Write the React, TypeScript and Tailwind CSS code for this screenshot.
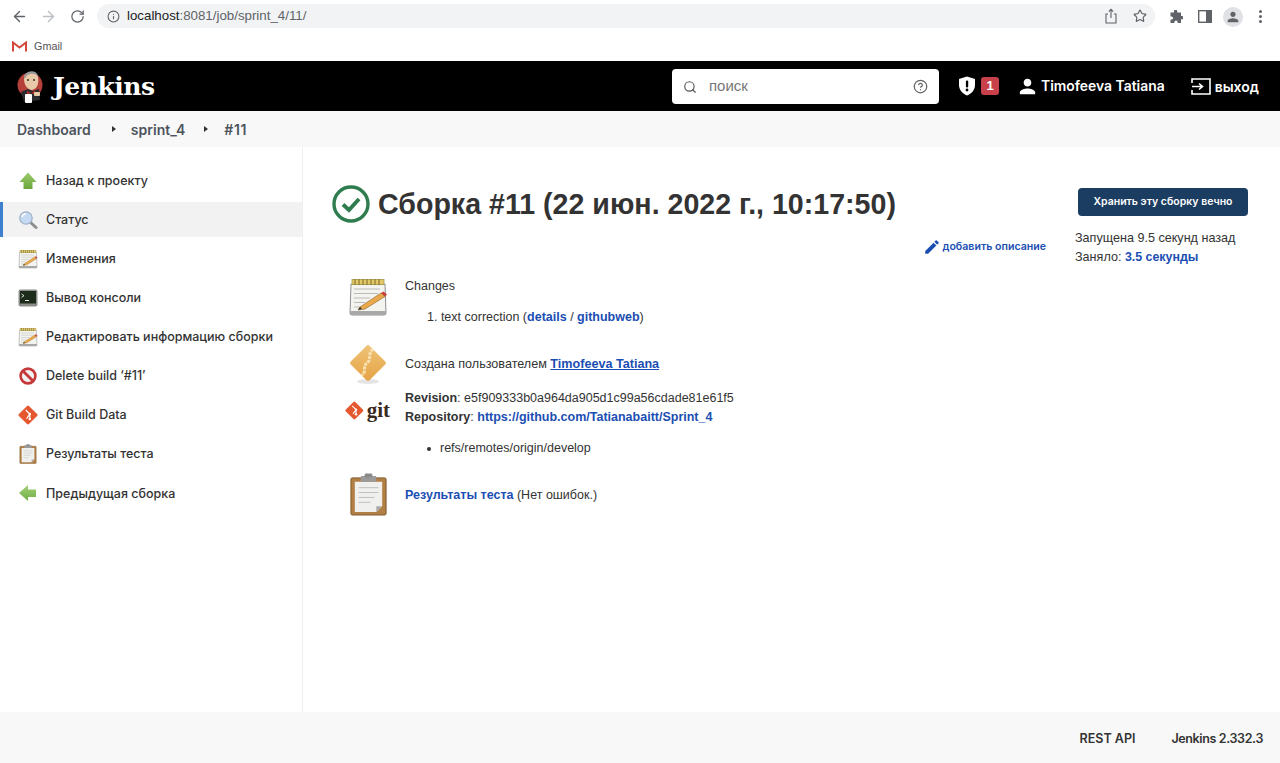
import { ArrowLeft, ArrowRight, RotateCw, Info, Star, Search, CircleHelp } from 'lucide-react';

const personPath = 'M12 12c2.21 0 4-1.79 4-4s-1.79-4-4-4-4 1.79-4 4 1.79 4 4 4zm0 2c-2.67 0-8 1.34-8 4v2h16v-2c0-2.66-5.33-4-8-4z';

function GreenArrowUp() {
    return (
        <svg width="20" height="20" viewBox="0 0 20 20">
            <defs>
                <linearGradient id="gu" x1="0" y1="0" x2="0" y2="1">
                    <stop offset="0" stopColor="#9ccb6a" />
                    <stop offset="1" stopColor="#6aa63c" />
                </linearGradient>
            </defs>
            <path d="M10 1.5 L18.5 11 H14.5 V18 H5.5 V11 H1.5 Z" fill="url(#gu)" />
        </svg>
    );
}

function GreenArrowLeft() {
    return (
        <svg width="20" height="20" viewBox="0 0 20 20">
            <defs>
                <linearGradient id="gl" x1="0" y1="0" x2="0" y2="1">
                    <stop offset="0" stopColor="#a3d175" />
                    <stop offset="1" stopColor="#6fae48" />
                </linearGradient>
            </defs>
            <path d="M1 10 L10 2 V6.5 H18 V14 H10 V18 Z" fill="url(#gl)" />
        </svg>
    );
}

function Magnifier() {
    return (
        <svg width="20" height="20" viewBox="0 0 20 20">
            <path d="M12 12 L18 17.5" stroke="#8e8e8e" strokeWidth="3" strokeLinecap="round" />
            <circle cx="8" cy="8" r="6.2" fill="#c5d9f2" stroke="#9fb2c9" strokeWidth="1.3" />
            <path d="M4 7 a4.5 4.5 0 0 1 4 -3.2" stroke="#fff" strokeWidth="1.4" fill="none" />
        </svg>
    );
}

function Notepad({ size = 20 }: { size?: number }) {
    return (
        <svg width={size} height={size} viewBox="0 0 40 40">
            <path d="M3 7 H37 L38 36 Q38 38 36 38 H4 Q2 38 2 36 Z" fill="#f3f3f0" stroke="#8f8f8f" strokeWidth="1" />
            <path d="M2 34 H38 V36 Q38 38 36 38 H4 Q2 38 2 36 Z" fill="#a8a8a8" />
            <rect x="4" y="2.5" width="32" height="5" fill="#e2c867" stroke="#a08f3c" strokeWidth="0.7" />
            <path d="M7 2v6M11 2v6M15 2v6M19 2v6M23 2v6M27 2v6M31 2v6" stroke="#7b6d2b" strokeWidth="1" />
            <path d="M6 12h26M6 16.5h24M6 21h16M6 25.5h11M6 30h8" stroke="#b3b3b3" strokeWidth="0.9" />
            <path d="M12 30 L33 16 L37 19.5 L17 32 L10 33 Z" fill="#e9a94c" stroke="#8a6526" strokeWidth="0.6" />
            <path d="M33 16 L35.5 14.5 L39 17.5 L37 19.5 Z" fill="#c9403a" />
            <path d="M10 33 L12 30 L14 32 Z" fill="#333" />
        </svg>
    );
}

function Terminal() {
    return (
        <svg width="20" height="20" viewBox="0 0 20 20">
            <rect x="0.5" y="1.5" width="19" height="17" rx="2" fill="#8a8d88" />
            <rect x="2" y="3" width="16" height="12.5" fill="#1c2b1c" />
            <path d="M3.5 6 L6 7.7 L3.5 9.4" stroke="#e8efe8" strokeWidth="0.9" fill="none" />
            <path d="M7 12.5 H11" stroke="#e8efe8" strokeWidth="1" />
        </svg>
    );
}

function NoEntry() {
    return (
        <svg width="20" height="20" viewBox="0 0 20 20">
            <circle cx="10" cy="10" r="7.4" fill="#f2f2f2" stroke="#c6393a" strokeWidth="2.6" />
            <path d="M5 5 L15 15" stroke="#c6393a" strokeWidth="2.8" />
        </svg>
    );
}

function GitDiamond({ size = 22 }: { size?: number }) {
    return (
        <svg width={size} height={size} viewBox="0 0 22 22">
            <rect x="3.2" y="3.2" width="15.6" height="15.6" rx="1.5" fill="#e4572f" transform="rotate(45 11 11)" />
            <path d="M8.5 5.5 L13 10 V15.5 M13 10 L9.5 15" stroke="#fff" strokeWidth="1.3" fill="none" />
            <circle cx="13" cy="10" r="1.4" fill="#fff" />
            <circle cx="13" cy="15.5" r="1.4" fill="#fff" />
        </svg>
    );
}

function Clipboard({ size = 20 }: { size?: number }) {
    return (
        <svg width={size} height={size} viewBox="0 0 40 44">
            <rect x="2" y="5" width="36" height="38" rx="1.5" fill="#b27f45" stroke="#7e5a2f" strokeWidth="1" />
            <path d="M6 9 H34 V34 L28 40 H6 Z" fill="#f0f0ee" />
            <path d="M28 40 L34 34 H28 Z" fill="#a8a8a8" />
            <rect x="12" y="3" width="16" height="6" rx="1" fill="#9a9a9a" />
            <rect x="16" y="0.5" width="8" height="4" rx="1.5" fill="#8a8a8a" />
            <path d="M10 15H30M10 20H30M10 25H26M10 30H22" stroke="#bdbdbd" strokeWidth="1" />
        </svg>
    );
}

function Fingerprint() {
    return (
        <svg width="40" height="42" viewBox="0 0 40 42">
            <defs>
                <linearGradient id="fp" x1="0" y1="0" x2="1" y2="1">
                    <stop offset="0" stopColor="#efc478" />
                    <stop offset="1" stopColor="#e6a245" />
                </linearGradient>
            </defs>
            <ellipse cx="20" cy="38.5" rx="11" ry="2.5" fill="#e5e5e5" />
            <rect x="6.8" y="6.8" width="26.4" height="26.4" rx="2" fill="url(#fp)" transform="rotate(45 20 20)" />
            <path d="M25 6 C19 12 24 16 19 20 C14 24 19 28 14 32" stroke="#f8e3b5" strokeWidth="3" fill="none" strokeDasharray="3 1" />
        </svg>
    );
}

function JenkinsLogo() {
    return (
        <svg width="28" height="36" viewBox="0 0 28 36">
            <circle cx="14" cy="17" r="12.5" fill="#b5403a" />
            <path d="M8 11 C7 3 20 1 22 9 C23 14 22 21 16 22 C11 22 8 16 8 11 Z" fill="#e8c9a8" />
            <path d="M8 11 C7 3 20 0 22 8 C18 5 12 5 10 9 Z" fill="#9a9a9a" />
            <circle cx="12" cy="12" r="0.9" fill="#222" />
            <circle cx="18" cy="12" r="0.9" fill="#222" />
            <path d="M5 24 L12 21 L17 23 L23 21 L24 32 L8 34 Z" fill="#2a2a2f" />
            <path d="M11 23 L15 25 L19 23 L19 26 L15 25 L11 26 Z" fill="#c9302c" />
            <rect x="9" y="26" width="7" height="9" rx="1" fill="#fff" />
            <rect x="18" y="24" width="6" height="4" rx="1" fill="#e8c9a8" />
        </svg>
    );
}

const menu = [
    { label: 'Назад к проекту', icon: <GreenArrowUp /> },
    { label: 'Статус', icon: <Magnifier />, active: true },
    { label: 'Изменения', icon: <Notepad /> },
    { label: 'Вывод консоли', icon: <Terminal /> },
    { label: 'Редактировать информацию сборки', icon: <Notepad /> },
    { label: 'Delete build ‘#11’', icon: <NoEntry /> },
    { label: 'Git Build Data', icon: <GitDiamond /> },
    { label: 'Результаты теста', icon: <Clipboard /> },
    { label: 'Предыдущая сборка', icon: <GreenArrowLeft /> },
];

export default function App() {
    return (
        <div className="w-[1280px] h-[763px] flex flex-col overflow-hidden bg-white text-[#333] font-['Liberation_Sans',sans-serif]">
            {/* browser toolbar */}
            <div className="h-[33px] flex items-center pl-[11px] pr-[8px]">
                <ArrowLeft size={17} className="text-[#5f6368]" />
                <ArrowRight size={17} className="text-[#bcbfc3] ml-[12px]" />
                <RotateCw size={15} className="text-[#5f6368] ml-[13px]" />
                <div className="ml-[12px] -mt-[1px] w-[1058px] h-[24px] rounded-full bg-[#f1f3f4] flex items-center pl-[10px] pr-[8px]">
                    <Info size={13} className="text-[#5f6368]" />
                    <span className="ml-[7px] text-[13.3px] text-[#5f6368] leading-none">
                        <span className="text-[#202124]">localhost</span>:8081/job/sprint_4/11/
                    </span>
                    <div className="ml-auto flex items-center gap-[16px]">
                        <svg className="-mr-[1px]" width="14" height="16" viewBox="0 0 14 16" fill="none" stroke="#5f6368" strokeWidth="1.1">
                            <path d="M4 6 H2 V15 H12 V6 H10" />
                            <path d="M7 10 V1.5 M4.8 3.6 L7 1.3 L9.2 3.6" />
                        </svg>
                        <Star size={14} className="text-[#5f6368]" />
                    </div>
                </div>
                <div className="ml-[14px] flex items-center">
                    <svg width="14" height="14" viewBox="0 0 14 14" fill="#5f6368">
                        <path d="M5 1.2 a1.6 1.6 0 0 1 3.2 0 V2.5 H12 V6 H13 a1.6 1.6 0 0 1 0 3.2 H12 V13 H8.6 V12 a1.6 1.6 0 0 0 -3.2 0 V13 H1.5 V9.6 H2.5 a1.6 1.6 0 0 0 0 -3.2 H1.5 V2.5 H5 Z" />
                    </svg>
                    <svg className="ml-[15px]" width="14" height="13" viewBox="0 0 14 13">
                        <rect x="0.7" y="0.7" width="12.6" height="11.6" fill="none" stroke="#5f6368" strokeWidth="1.4" />
                        <rect x="8" y="0.7" width="5.3" height="11.6" fill="#5f6368" />
                    </svg>
                    <div className="ml-[11px] w-[20px] h-[20px] rounded-full bg-[#dfe1e5] flex items-center justify-center">
                        <svg width="16" height="16" viewBox="0 0 24 24" fill="#5f6368"><path d={personPath} /></svg>
                    </div>
                    <div className="ml-[16px] mr-[10px] flex flex-col gap-[2px]">
                        <span className="w-[3px] h-[3px] rounded-full bg-[#5f6368]" />
                        <span className="w-[3px] h-[3px] rounded-full bg-[#5f6368]" />
                        <span className="w-[3px] h-[3px] rounded-full bg-[#5f6368]" />
                    </div>
                </div>
            </div>

            {/* bookmarks */}
            <div className="h-[28px] flex items-center pl-[12px] pb-[1px]">
                <svg width="15" height="11" viewBox="0 0 15 11" fill="none">
                    <path d="M1 10.5 V1.5 L7.5 6.5 L14 1.5 V10.5" stroke="#d1483d" strokeWidth="2" />
                </svg>
                <span className="ml-[7px] text-[10.8px] text-[#555]">Gmail</span>
            </div>

            {/* jenkins header */}
            <header className="h-[50px] bg-black flex items-center pl-[16px] pr-[21px] text-white">
                <JenkinsLogo />
                <span className="ml-[9px] font-['DejaVu_Serif',serif] font-bold text-[25px] tracking-[-0.5px] leading-none">Jenkins</span>
                <div className="ml-auto mt-[1px] w-[267px] h-[35px] bg-white rounded-[4px] flex items-center pl-[11px] pr-[11px] text-[#777]">
                    <Search size={14} className="text-[#555]" />
                    <span className="ml-[12px] text-[15px]">поиск</span>
                    <CircleHelp size={15} className="ml-auto text-[#666]" />
                </div>
                <svg className="ml-[19px]" width="18" height="20" viewBox="0 0 18 20">
                    <path d="M9 0.5 L17 3 V9 C17 14 13.5 17.8 9 19.5 C4.5 17.8 1 14 1 9 V3 Z" fill="#fff" />
                    <rect x="7.9" y="4.5" width="2.3" height="7" rx="1" fill="#000" />
                    <circle cx="9" cy="14" r="1.4" fill="#000" />
                </svg>
                <span className="ml-[5px] w-[18px] h-[18px] rounded-[3px] bg-[#c8404a] flex items-center justify-center text-[13px] font-bold">1</span>
                <svg className="ml-[17px]" width="23" height="23" viewBox="0 0 24 24" fill="#fff"><path d={personPath} /></svg>
                <span className="ml-[2px] font-['Inter',sans-serif] font-semibold text-[13.9px] whitespace-nowrap">Timofeeva Tatiana</span>
                <svg className="ml-[26px]" width="20" height="17" viewBox="0 0 20 17" fill="none" stroke="#fff" strokeWidth="1.6">
                    <path d="M1 5 V1 H19 V16 H1 V12" />
                    <path d="M1 8.5 H11 M8 5.5 L11.5 8.5 L8 11.5" />
                </svg>
                <span className="ml-[4px] font-['Inter',sans-serif] font-semibold text-[14px]">выход</span>
            </header>

            {/* breadcrumbs */}
            <nav className="h-[36px] bg-[#f8f8f8] flex items-center pl-[17px] font-['Inter',sans-serif] font-semibold text-[14px] text-[#4d545d]">
                <span>Dashboard</span>
                <span className="ml-[21px] w-0 h-0 border-y-[3.5px] border-y-transparent border-l-[4px] border-l-[#333]" />
                <span className="ml-[15px]">sprint_4</span>
                <span className="ml-[19px] w-0 h-0 border-y-[3.5px] border-y-transparent border-l-[4px] border-l-[#333]" />
                <span className="ml-[16px] tracking-[0.7px]">#11</span>
            </nav>

            <div className="flex-1 flex min-h-0">
                {/* sidebar */}
                <aside className="w-[303px] shrink-0 border-r border-[#f0f0f0] pt-[16px] flex flex-col gap-[4.12px]">
                    {menu.map(item => (
                        <div
                            key={item.label}
                            className={`h-[35px] flex items-center pl-[18px] border-l-[3px] ${item.active ? 'bg-[#f2f2f2] border-[#3f7fd0]' : 'border-transparent'}`}
                        >
                            <span className="w-[20px] h-[20px] -ml-[3px] flex items-center justify-center shrink-0">{item.icon}</span>
                            <span className="ml-[8px] pt-[1px] text-[12.5px] font-['Inter',sans-serif] font-medium text-[#333] whitespace-nowrap">{item.label}</span>
                        </div>
                    ))}
                </aside>

                {/* main */}
                <main className="flex-1 flex pl-[29px] pr-[32px]">
                    <div className="flex-1 min-w-0">
                        <div className="mt-[38px] flex items-center h-[38px]">
                            <svg width="38" height="38" viewBox="0 0 38 38" fill="none">
                                <circle cx="19" cy="19" r="17" stroke="#2f7d4f" strokeWidth="3.4" />
                                <path d="M11 19.5 L17 25 L27 14" stroke="#2f7d4f" strokeWidth="4" />
                            </svg>
                            <h1 className="ml-[8px] text-[28.6px] font-bold whitespace-nowrap leading-none">Сборка #11 (22 июн. 2022 г., 10:17:50)</h1>
                        </div>

                        <div className="mt-[15px] pr-[29px] flex justify-end items-center text-[#1b4eb3] font-['Inter',sans-serif] font-semibold text-[10.6px]">
                            <svg width="18" height="18" viewBox="0 0 24 24" fill="#1b4eb3">
                                <path d="M3 17.25V21h3.75L17.81 9.94l-3.75-3.75L3 17.25zM20.71 7.04a1 1 0 0 0 0-1.41l-2.34-2.34a1 1 0 0 0-1.41 0l-1.83 1.83 3.75 3.75 1.83-1.83z" />
                            </svg>
                            <span className="ml-[1px]">добавить описание</span>
                        </div>

                        <div className="mt-[21px] flex">
                            <span className="ml-[16px] w-[40px] shrink-0"><Notepad size={40} /></span>
                            <div className="ml-[17px] text-[12.5px] leading-[18px]">
                                <p>Changes</p>
                                <p className="mt-[13px] ml-[22px]">1. text correction (<span className="font-bold text-[#1b4eb3]">details</span> / <span className="font-bold text-[#1b4eb3]">githubweb</span>)</p>
                            </div>
                        </div>

                        <div className="mt-[17px] flex items-center">
                            <span className="ml-[16px] w-[40px] shrink-0"><Fingerprint /></span>
                            <p className="ml-[17px] text-[12.6px] leading-[18px]">Создана пользователем <span className="font-bold underline text-[#1b4eb3]">Timofeeva Tatiana</span></p>
                        </div>

                        <div className="mt-[4px] flex">
                            <span className="ml-[13px] w-[45px] shrink-0 flex items-center h-[24px] mt-[9px]">
                                <GitDiamond size={21} />
                                <span className="ml-[3px] font-['Liberation_Serif',serif] font-bold text-[21px] text-[#3b2a1c] leading-none">git</span>
                            </span>
                            <div className="ml-[15px] text-[12.5px] leading-[19px]">
                                <p><b>Revision</b>: e5f909333b0a964da905d1c99a56cdade81e61f5</p>
                                <p><b>Repository</b>: <span className="font-bold text-[#1b4eb3]">https://github.com/Tatianabaitt/Sprint_4</span></p>
                                <p className="mt-[12px] ml-[35px] flex items-center">
                                    <span className="w-[4px] h-[4px] rounded-full bg-[#333] mr-[9px] -ml-[13px]" />
                                    refs/remotes/origin/develop
                                </p>
                            </div>
                        </div>

                        <div className="mt-[15px] flex items-center">
                            <span className="ml-[15px] w-[41px] shrink-0"><Clipboard size={43} /></span>
                            <p className="ml-[17px] text-[12.5px] leading-[18px]"><span className="font-bold text-[#1b4eb3]">Результаты теста</span> (Нет ошибок.)</p>
                        </div>
                    </div>

                    <div className="w-[173px] shrink-0 pt-[41px]">
                        <button className="ml-[3px] w-[170px] h-[28px] rounded-[4px] bg-[#1b3d61] text-white text-[10.5px] font-['Inter',sans-serif] font-semibold">Хранить эту сборку вечно</button>
                        <p className="mt-[13px] text-[12.6px] leading-[19px]">Запущена 9.5 секунд назад</p>
                        <p className="text-[12.6px] leading-[19px]">Заняло: <span className="font-bold text-[12.4px] text-[#1b4eb3]">3.5 секунды</span></p>
                    </div>
                </main>
            </div>

            {/* footer */}
            <footer className="h-[51px] bg-[#f8f8f8] flex items-center justify-end pt-[3px] pr-[17px] gap-[36px] text-[12.5px] font-['Inter',sans-serif] font-semibold text-[#333]">
                <span>REST API</span>
                <span className="tracking-[-0.37px]">Jenkins 2.332.3</span>
            </footer>
        </div>
    );
}
